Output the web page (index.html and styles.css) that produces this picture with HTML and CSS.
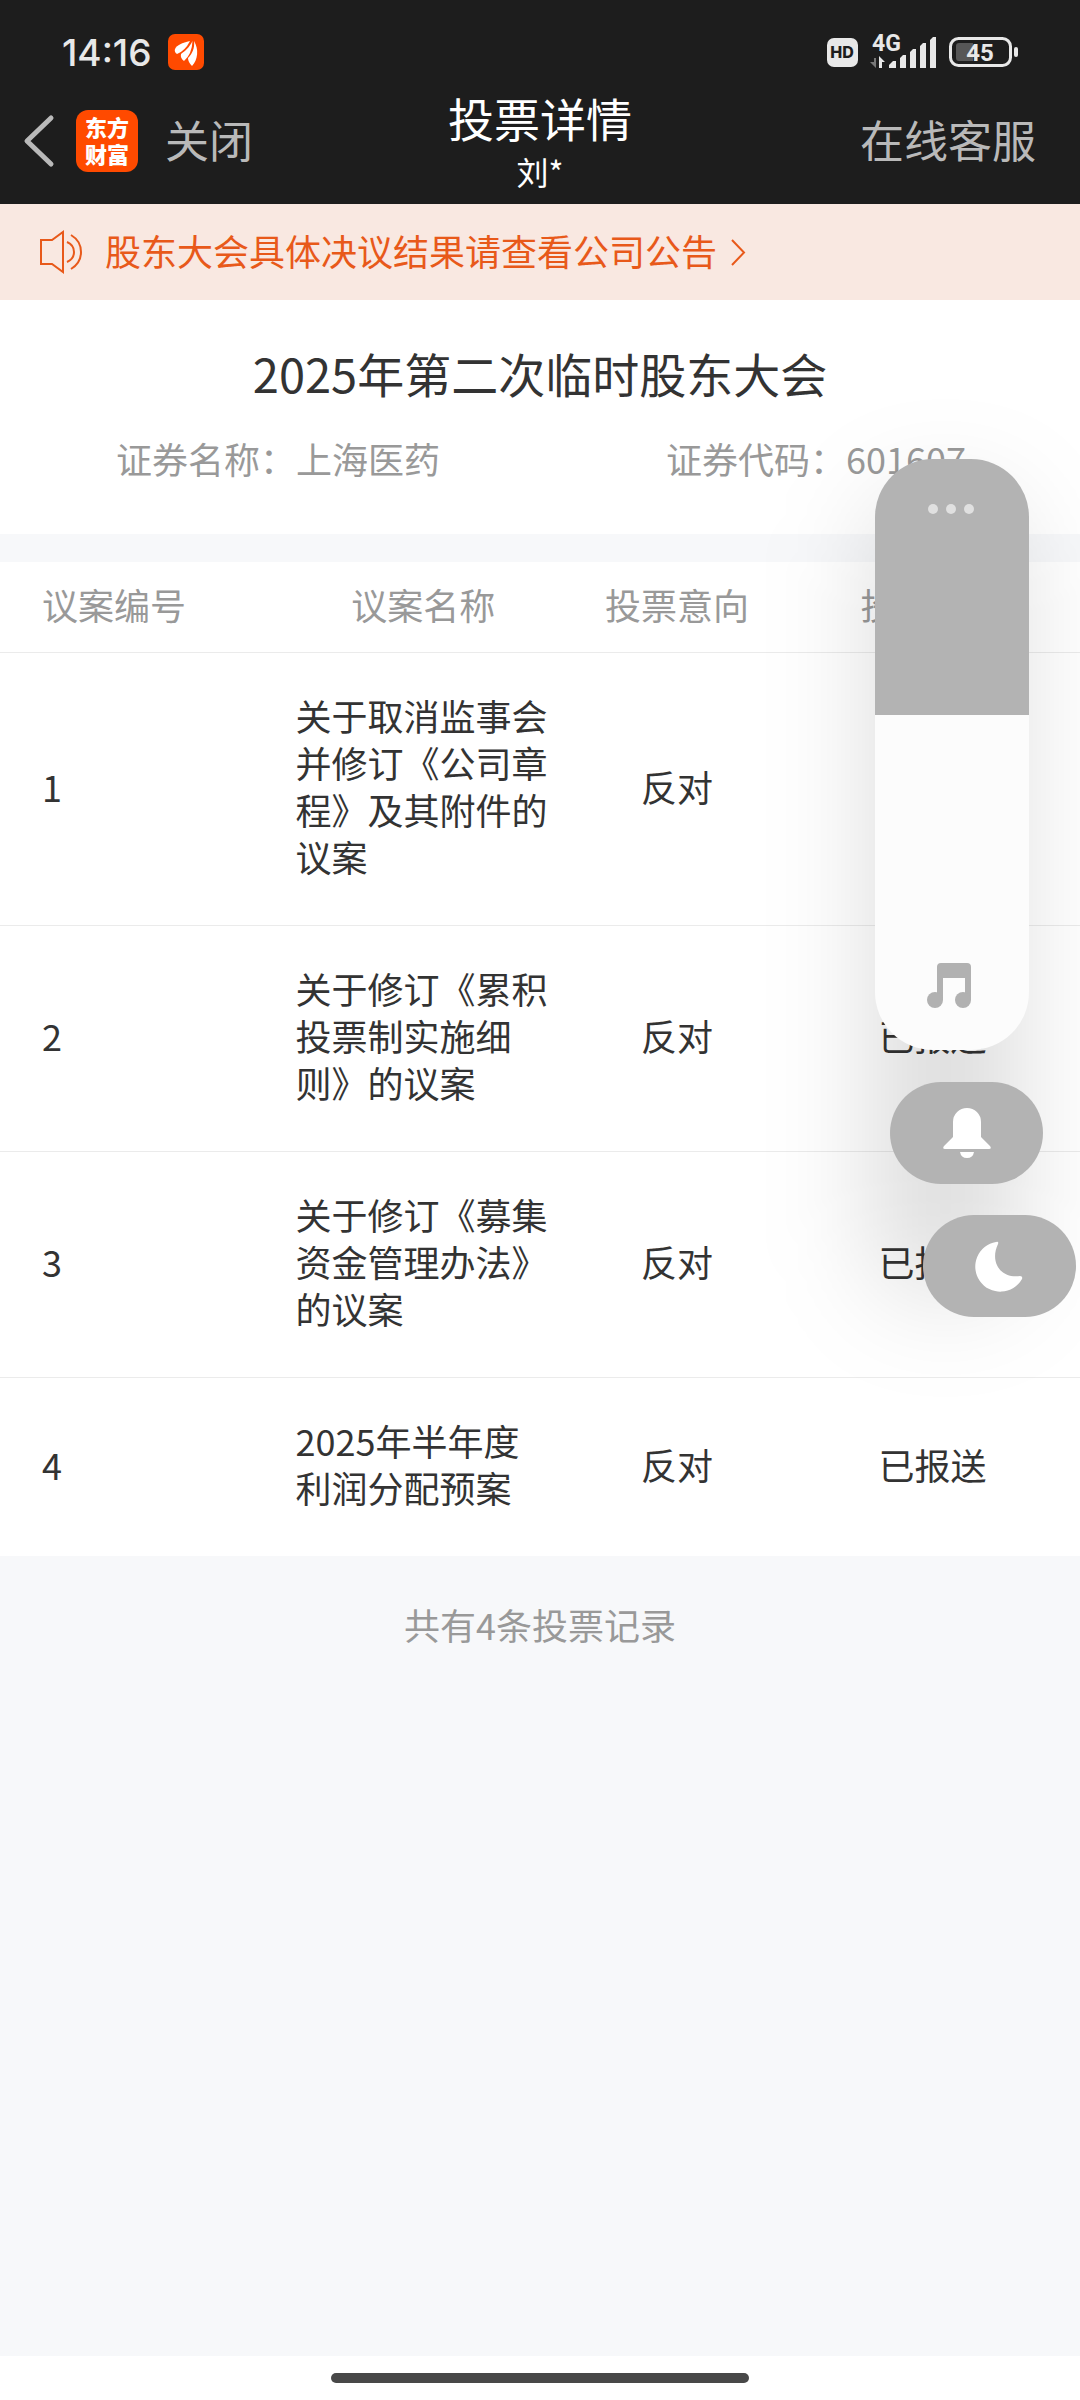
FILE: index.html
```
<!DOCTYPE html>
<html lang="zh-CN">
<head>
	<meta charset="utf-8">
	<meta name="viewport" content="width=device-width">
	<title>投票详情</title>
	<link rel="stylesheet" href="styles.css">
</head>
<body>

<header class="top">
	<div class="status">
		<span class="status-time">14:16</span>
		<svg class="status-app" width="36" height="36" viewBox="0 0 36 36">
			<rect width="36" height="36" rx="7" fill="#ff4a00"/>
			<g fill="#fff">
				<path d="M22 7C14 9 9 11 7 15q-1 3 2 5 8-3 13-13z"/>
				<path d="M24.500 7C21 14 17 17 13 20q-1 4 3 7 8-7 8.500-20z"/>
				<path d="M26 7c1 7-2 13-6 17q0 4 4 8c6-6 7-17 2-25z"/>
			</g>
		</svg>
		<div class="status-right">
			<svg width="31" height="29" viewBox="0 0 31 29">
				<rect width="31" height="29" rx="7" fill="#e8e8e8"/>
				<text x="15" y="20" class="hd">HD</text>
			</svg>
			<svg width="67" height="36" viewBox="0 0 67 36">
				<text x="2" y="17" class="net">4G</text>
				<path d="M4 24h2v10L0 28h4z" fill="#777"/>
				<path d="M9 22l6 6h-3v6H9z" fill="#e8e8e8"/>
				<path d="M19 34v-3l4-4h3v7zM30 34V24l3-3h3v13zM40 34V18l3-3h3v19zM50 34V12l3-3h3v25zM60 34V6l3-3h3v31z" fill="#e8e8e8"/>
			</svg>
			<svg width="69" height="30" viewBox="0 0 69 30">
				<rect x="1.5" y="1.5" width="60" height="27" rx="8" fill="none" stroke="#e8e8e8" stroke-width="3"/>
				<path d="M10 6h14v18H10q-3 0-3-3V9q0-3 3-3z" fill="#575757"/>
				<rect x="65" y="10" width="4" height="10" rx="2" fill="#e8e8e8"/>
				<text x="31" y="24" class="bat">45</text>
			</svg>
		</div>
	</div>

	<nav class="nav">
		<div class="nav-left">
			<button class="nav-back" type="button" aria-label="返回">
				<svg width="30" height="52" viewBox="0 0 30 52"><path d="M27 3L3 26l24 23" fill="none" stroke="#b9b9b9" stroke-width="5" stroke-linecap="round" stroke-linejoin="round"/></svg>
			</button>
			<span class="logo">东方<br>财富</span>
			<button class="nav-text" type="button">关闭</button>
		</div>
		<div class="nav-title">
			<h1>投票详情</h1>
			<p>刘*</p>
		</div>
		<button class="nav-text nav-right" type="button">在线客服</button>
	</nav>
</header>

<a class="notice" href="#">
	<svg width="43" height="42" viewBox="0 0 43 42" fill="none" stroke="#e8591a" stroke-width="2">
		<path d="M1 9h11L23 1v40l-11-8H1z"/>
		<path d="M27 11q7 3 7 10t-7 10M31 4q10 6 10 17T31 38"/>
	</svg>
	<span>股东大会具体决议结果请查看公司公告</span>
	<svg width="14" height="27" viewBox="0 0 14 27" fill="none" stroke="#e8591a" stroke-width="2"><path d="M1 1l12 12.500L1 26"/></svg>
</a>

<main>
	<section class="meeting">
		<h2>2025年第二次临时股东大会</h2>
		<div class="meeting-info">
			<span>证券名称：上海医药</span>
			<span>证券代码：601607</span>
		</div>
	</section>

	<table class="votes">
		<thead>
			<tr>
				<th class="col-no">议案编号</th>
				<th class="col-name">议案名称</th>
				<th class="col-vote">投票意向</th>
				<th class="col-state">投票状态</th>
			</tr>
		</thead>
		<tbody>
			<tr>
				<td class="col-no">1</td>
				<td class="col-name">关于取消监事会并修订《公司章程》及其附件的议案</td>
				<td class="col-vote">反对</td>
				<td class="col-state">已报送</td>
			</tr>
			<tr>
				<td class="col-no">2</td>
				<td class="col-name">关于修订《累积投票制实施细则》的议案</td>
				<td class="col-vote">反对</td>
				<td class="col-state">已报送</td>
			</tr>
			<tr>
				<td class="col-no">3</td>
				<td class="col-name">关于修订《募集资金管理办法》的议案</td>
				<td class="col-vote">反对</td>
				<td class="col-state">已报送</td>
			</tr>
			<tr>
				<td class="col-no">4</td>
				<td class="col-name">2025年半年度利润分配预案</td>
				<td class="col-vote">反对</td>
				<td class="col-state">已报送</td>
			</tr>
		</tbody>
	</table>

	<p class="total">共有4条投票记录</p>
</main>

<footer class="home"><div class="home-bar"></div></footer>

<!-- system volume overlay -->
<div class="volume">
	<div class="volume-panel">
		<input class="volume-slider" type="range" min="0" max="100" value="57" aria-label="媒体音量">
		<button class="volume-more" type="button" aria-label="更多">
			<svg width="48" height="12" viewBox="0 0 48 12" fill="#e0e0e0"><circle cx="6" cy="6" r="5"/><circle cx="24" cy="6" r="5"/><circle cx="42" cy="6" r="5"/></svg>
		</button>
		<svg class="volume-music" width="44" height="45" viewBox="0 0 44 45" fill="#b1b1b1">
			<path d="M10 4q0-4 4-4h26q4 0 4 4v33h-6V15H16v22h-6z"/>
			<circle cx="8" cy="37" r="8"/><circle cx="36" cy="37" r="8"/>
		</svg>
	</div>
	<button class="pill pill-bell" type="button" aria-label="静音">
		<svg width="48" height="51" viewBox="0 0 48 51" fill="#fff">
			<path d="M10 14a14 14 0 0 1 28 0v15l9 9q2 3-1 3H2q-3 0-1-3l9-9z"/>
			<path d="M17 44h14q-1 6-7 6t-7-6z"/>
		</svg>
	</button>
	<button class="pill pill-moon" type="button" aria-label="勿扰">
		<svg width="49" height="51" viewBox="-1 -1 49 51" fill="#fff">
			<path d="M20 0q3-1 2 2c-9 19 4 35 22 32q3 0 2 3A25 25 0 1 1 20 0z"/>
		</svg>
	</button>
</div>

</body>
</html>
```

FILE: styles.css
```
* {
	box-sizing: border-box;
}

body {
	margin: 0;
	min-height: 100vh;
	display: flex;
	flex-direction: column;
	position: relative;
	overflow-x: hidden;
	background: #f7f8fa;
	color: #333;
	font-family: "Noto Sans CJK SC", sans-serif;
	font-size: 36px;
	line-height: 47px;
}

h1, h2, p {
	margin: 0;
	font-weight: 400;
}

button {
	padding: 0;
	border: 0;
	background: none;
	font: inherit;
	color: inherit;
}

svg {
	display: block;
	overflow: visible;
}

/* header */
.top {
	background: #1d1d1d;
	color: #fff;
}

.status {
	display: flex;
	align-items: center;
	height: 78px;
	padding: 26px 62px 0;
	color: #e8e8e8;
}

.status-time {
	font-family: Inter, sans-serif;
	font-weight: 500;
	font-size: 37px;
}

.status-app {
	margin-left: 16px;
}

.status-right {
	display: flex;
	align-items: center;
	gap: 12px;
	margin-left: auto;
}

.status text {
	font-family: Roboto, sans-serif;
	font-weight: 700;
	fill: #e8e8e8;
}

.status .hd {
	font-family: Inter, sans-serif;
	font-size: 16px;
	font-weight: 800;
	fill: #1d1d1d;
	text-anchor: middle;
}

.status .net {
	font-size: 23px;
}

.status .bat {
	font-size: 24px;
	text-anchor: middle;
}

.nav {
	display: grid;
	grid-template-columns: 1fr auto 1fr;
	align-items: center;
	height: 126px;
	padding: 0 24px;
}

.nav-left {
	display: flex;
	align-items: center;
}

.logo {
	width: 62px;
	height: 62px;
	margin: 0 27px 0 22px;
	padding-top: 3px;
	border-radius: 12px;
	background: #ff4a00;
	font-size: 22px;
	font-weight: 900;
	line-height: 27px;
	text-align: center;
}

.nav-text {
	padding-bottom: 4px;
	color: #b9b9b9;
	font-size: 44px;
	line-height: 60px;
}

.nav-right {
	justify-self: end;
	margin-right: 20px;
}

.nav-title {
	text-align: center;
}

.nav-title h1 {
	font-size: 46px;
	line-height: 56px;
}

.nav-title p {
	margin-top: 4px;
	font-size: 32px;
	line-height: 44px;
}

/* notice */
.notice {
	display: flex;
	align-items: center;
	height: 96px;
	padding: 0 40px;
	background: #f9e8e1;
	color: #e8591a;
	text-decoration: none;
}

.notice span {
	margin: 0 14px 0 22px;
	padding-bottom: 4px;
}

main {
	flex: 1;
}

/* meeting */
.meeting {
	margin-bottom: 28px;
	padding: 41px 0 52px;
	background: #fff;
}

.meeting h2 {
	font-size: 47px;
	line-height: 64px;
	text-align: center;
}

.meeting-info {
	display: flex;
	justify-content: space-between;
	margin-top: 30px;
	padding: 0 114px 0 116px;
	color: #999;
}

/* votes */
.votes {
	width: 100%;
	table-layout: fixed;
	border-collapse: collapse;
	background: #fff;
}

.votes th {
	padding: 19px 0 24px;
	border-bottom: 1px solid #ebebeb;
	color: #999;
	font-weight: 400;
}

.votes td {
	padding: 39px 0 45px;
	text-align: center;
}

.votes tr + tr td {
	border-top: 1px solid #ebebeb;
}

.votes .col-no {
	width: 27%;
	padding-left: 42px;
	text-align: left;
}

.votes .col-name {
	width: 24%;
	padding-left: 4px;
}

.votes td.col-name {
	text-align: left;
}

.votes .col-vote {
	width: 23%;
	padding-left: 4px;
}

.votes .col-state {
	width: 26%;
	padding-right: 14px;
}

.total {
	padding: 45px 0;
	color: #999;
	text-align: center;
}

/* home indicator */
.home {
	display: flex;
	justify-content: center;
	height: 44px;
	padding-top: 17px;
	background: #fff;
}

.home-bar {
	width: 418px;
	height: 10px;
	border-radius: 5px;
	background: #484848;
}

/* volume overlay */
.volume {
	position: absolute;
	z-index: 1;
	top: 459px;
	right: 4px;
	width: 201px;
	display: flex;
	flex-direction: column;
}

.volume::before {
	content: "";
	position: absolute;
	z-index: -1;
	inset: 40px 60px 20px 0;
	border-radius: 60px;
	background: rgba(0, 0, 0, .14);
	filter: blur(54px);
}

.volume-panel {
	position: relative;
	width: 154px;
	height: 591px;
	margin-bottom: 32px;
}

.volume-slider {
	display: block;
	width: 100%;
	height: 100%;
	margin: 0;
	appearance: none;
	writing-mode: vertical-lr;
	direction: rtl;
	border-radius: 58px;
	background: linear-gradient(#b3b3b3 256px, #fcfcfc 256px);
}

.volume-slider::-webkit-slider-thumb {
	appearance: none;
	width: 154px;
	height: 2px;
	background: transparent;
}

.volume-more,
.volume-music {
	position: absolute;
	left: 52px;
}

.volume-more {
	top: 44px;
}

.volume-music {
	bottom: 42px;
}

.pill {
	display: flex;
	align-items: center;
	justify-content: center;
	width: 153px;
	height: 102px;
	border-radius: 51px;
	background: #b3b3b3;
}

.pill-bell {
	margin: 0 0 31px 15px;
}

.pill-moon {
	align-self: flex-end;
}
```
